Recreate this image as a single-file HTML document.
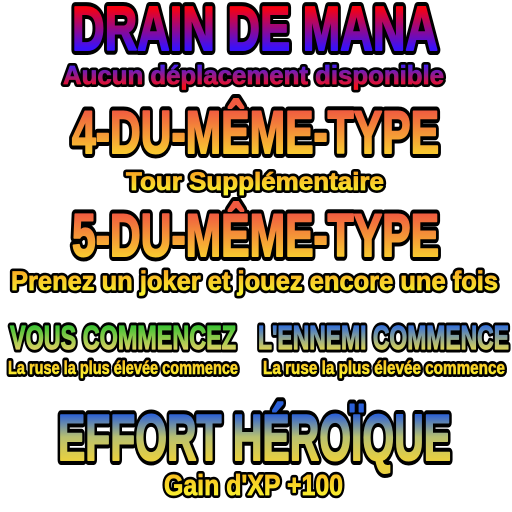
<!DOCTYPE html>
<html><head><meta charset="utf-8"><style>
html,body{margin:0;padding:0;background:#fff;width:512px;height:512px;overflow:hidden}
svg{display:block}
text{font-family:"Liberation Sans Narrow","Liberation Sans",sans-serif;font-weight:bold;stroke-linejoin:round;}
.o text:first-child{stroke:#000;fill:#000}
</style></head><body>
<svg width="512" height="512" viewBox="0 0 512 512">
<defs>
<linearGradient id="g1" gradientUnits="userSpaceOnUse" x1="0" y1="8" x2="0" y2="48"><stop offset="0" stop-color="#f80010"/><stop offset="1" stop-color="#3a10f8"/></linearGradient>
<linearGradient id="g2" gradientUnits="userSpaceOnUse" x1="0" y1="64" x2="0" y2="86"><stop offset="0" stop-color="#3a20f8"/><stop offset="1" stop-color="#f01020"/></linearGradient>
<linearGradient id="g3" gradientUnits="userSpaceOnUse" x1="0" y1="110" x2="0" y2="153"><stop offset="0" stop-color="#f05a40"/><stop offset="1" stop-color="#f8c830"/></linearGradient>
<linearGradient id="g4" gradientUnits="userSpaceOnUse" x1="0" y1="171" x2="0" y2="192"><stop offset="0" stop-color="#f8a020"/><stop offset="1" stop-color="#f8f030"/></linearGradient>
<linearGradient id="g5" gradientUnits="userSpaceOnUse" x1="0" y1="213" x2="0" y2="256"><stop offset="0" stop-color="#f05a40"/><stop offset="1" stop-color="#f8c830"/></linearGradient>
<linearGradient id="g6" gradientUnits="userSpaceOnUse" x1="0" y1="268" x2="0" y2="292"><stop offset="0" stop-color="#f8a020"/><stop offset="1" stop-color="#f8f030"/></linearGradient>
<linearGradient id="g7" gradientUnits="userSpaceOnUse" x1="0" y1="324" x2="0" y2="349"><stop offset="0" stop-color="#30c030"/><stop offset="1" stop-color="#d8d060"/></linearGradient>
<linearGradient id="g8" gradientUnits="userSpaceOnUse" x1="0" y1="324" x2="0" y2="349"><stop offset="0" stop-color="#2a6ae0"/><stop offset="1" stop-color="#d8d058"/></linearGradient>
<linearGradient id="g9" gradientUnits="userSpaceOnUse" x1="0" y1="358" x2="0" y2="375"><stop offset="0" stop-color="#f8b020"/><stop offset="1" stop-color="#f8f030"/></linearGradient>
<linearGradient id="g10" gradientUnits="userSpaceOnUse" x1="0" y1="414" x2="0" y2="460"><stop offset="0" stop-color="#2a60d8"/><stop offset="0.5" stop-color="#b8c070"/><stop offset="1" stop-color="#e8d040"/></linearGradient>
<linearGradient id="g11" gradientUnits="userSpaceOnUse" x1="0" y1="475" x2="0" y2="496"><stop offset="0" stop-color="#f8c020"/><stop offset="1" stop-color="#f8f030"/></linearGradient>
</defs>
<g class="o"><text x="72" y="50" font-size="62" textLength="366" lengthAdjust="spacingAndGlyphs" stroke-width="10">DRAIN DE MANA</text><text x="72" y="50" font-size="62" textLength="366" lengthAdjust="spacingAndGlyphs" fill="url(#g1)" stroke="url(#g1)" stroke-width="2">DRAIN DE MANA</text></g>
<g class="o"><text x="63" y="84" font-size="26" textLength="381" lengthAdjust="spacingAndGlyphs" stroke-width="6">Aucun déplacement disponible</text><text x="63" y="84" font-size="26" textLength="381" lengthAdjust="spacingAndGlyphs" fill="url(#g2)" stroke="url(#g2)" stroke-width="0.8">Aucun déplacement disponible</text></g>
<g class="o"><text x="72" y="153" font-size="60" textLength="367" lengthAdjust="spacingAndGlyphs" stroke-width="10">4-DU-MÊME-TYPE</text><text x="72" y="153" font-size="60" textLength="367" lengthAdjust="spacingAndGlyphs" fill="url(#g3)" stroke="url(#g3)" stroke-width="2">4-DU-MÊME-TYPE</text></g>
<g class="o"><text x="126" y="190" font-size="25" textLength="258" lengthAdjust="spacingAndGlyphs" stroke-width="6">Tour Supplémentaire</text><text x="126" y="190" font-size="25" textLength="258" lengthAdjust="spacingAndGlyphs" fill="url(#g4)" stroke="url(#g4)" stroke-width="0.8">Tour Supplémentaire</text></g>
<g class="o"><text x="72" y="256" font-size="60" textLength="367" lengthAdjust="spacingAndGlyphs" stroke-width="10">5-DU-MÊME-TYPE</text><text x="72" y="256" font-size="60" textLength="367" lengthAdjust="spacingAndGlyphs" fill="url(#g5)" stroke="url(#g5)" stroke-width="2">5-DU-MÊME-TYPE</text></g>
<g class="o"><text x="11" y="290" font-size="27" textLength="487" lengthAdjust="spacingAndGlyphs" stroke-width="6">Prenez un joker et jouez encore une fois</text><text x="11" y="290" font-size="27" textLength="487" lengthAdjust="spacingAndGlyphs" fill="url(#g6)" stroke="url(#g6)" stroke-width="0.8">Prenez un joker et jouez encore une fois</text></g>
<g class="o"><text x="10" y="349" font-size="33" textLength="226" lengthAdjust="spacingAndGlyphs" stroke-width="7">VOUS COMMENCEZ</text><text x="10" y="349" font-size="33" textLength="226" lengthAdjust="spacingAndGlyphs" fill="url(#g7)" stroke="url(#g7)" stroke-width="1.2">VOUS COMMENCEZ</text></g>
<g class="o"><text x="258" y="349" font-size="33" textLength="251" lengthAdjust="spacingAndGlyphs" stroke-width="7">L'ENNEMI COMMENCE</text><text x="258" y="349" font-size="33" textLength="251" lengthAdjust="spacingAndGlyphs" fill="url(#g8)" stroke="url(#g8)" stroke-width="1.2">L'ENNEMI COMMENCE</text></g>
<g class="o"><text x="8" y="374" font-size="18" textLength="230" lengthAdjust="spacingAndGlyphs" stroke-width="6">La ruse la plus élevée commence</text><text x="8" y="374" font-size="18" textLength="230" lengthAdjust="spacingAndGlyphs" fill="url(#g9)" stroke="url(#g9)" stroke-width="0.6">La ruse la plus élevée commence</text></g>
<g class="o"><text x="263" y="374" font-size="18" textLength="242" lengthAdjust="spacingAndGlyphs" stroke-width="6">La ruse la plus élevée commence</text><text x="263" y="374" font-size="18" textLength="242" lengthAdjust="spacingAndGlyphs" fill="url(#g9)" stroke="url(#g9)" stroke-width="0.6">La ruse la plus élevée commence</text></g>
<g class="o"><text x="58" y="460" font-size="65" textLength="393" lengthAdjust="spacingAndGlyphs" stroke-width="10">EFFORT HÉROÏQUE</text><text x="58" y="460" font-size="65" textLength="393" lengthAdjust="spacingAndGlyphs" fill="url(#g10)" stroke="url(#g10)" stroke-width="2">EFFORT HÉROÏQUE</text></g>
<g class="o"><text x="164" y="495" font-size="29" textLength="179" lengthAdjust="spacingAndGlyphs" stroke-width="6">Gain d'XP +100</text><text x="164" y="495" font-size="29" textLength="179" lengthAdjust="spacingAndGlyphs" fill="url(#g11)" stroke="url(#g11)" stroke-width="0.8">Gain d'XP +100</text></g>
</svg>
</body></html>
